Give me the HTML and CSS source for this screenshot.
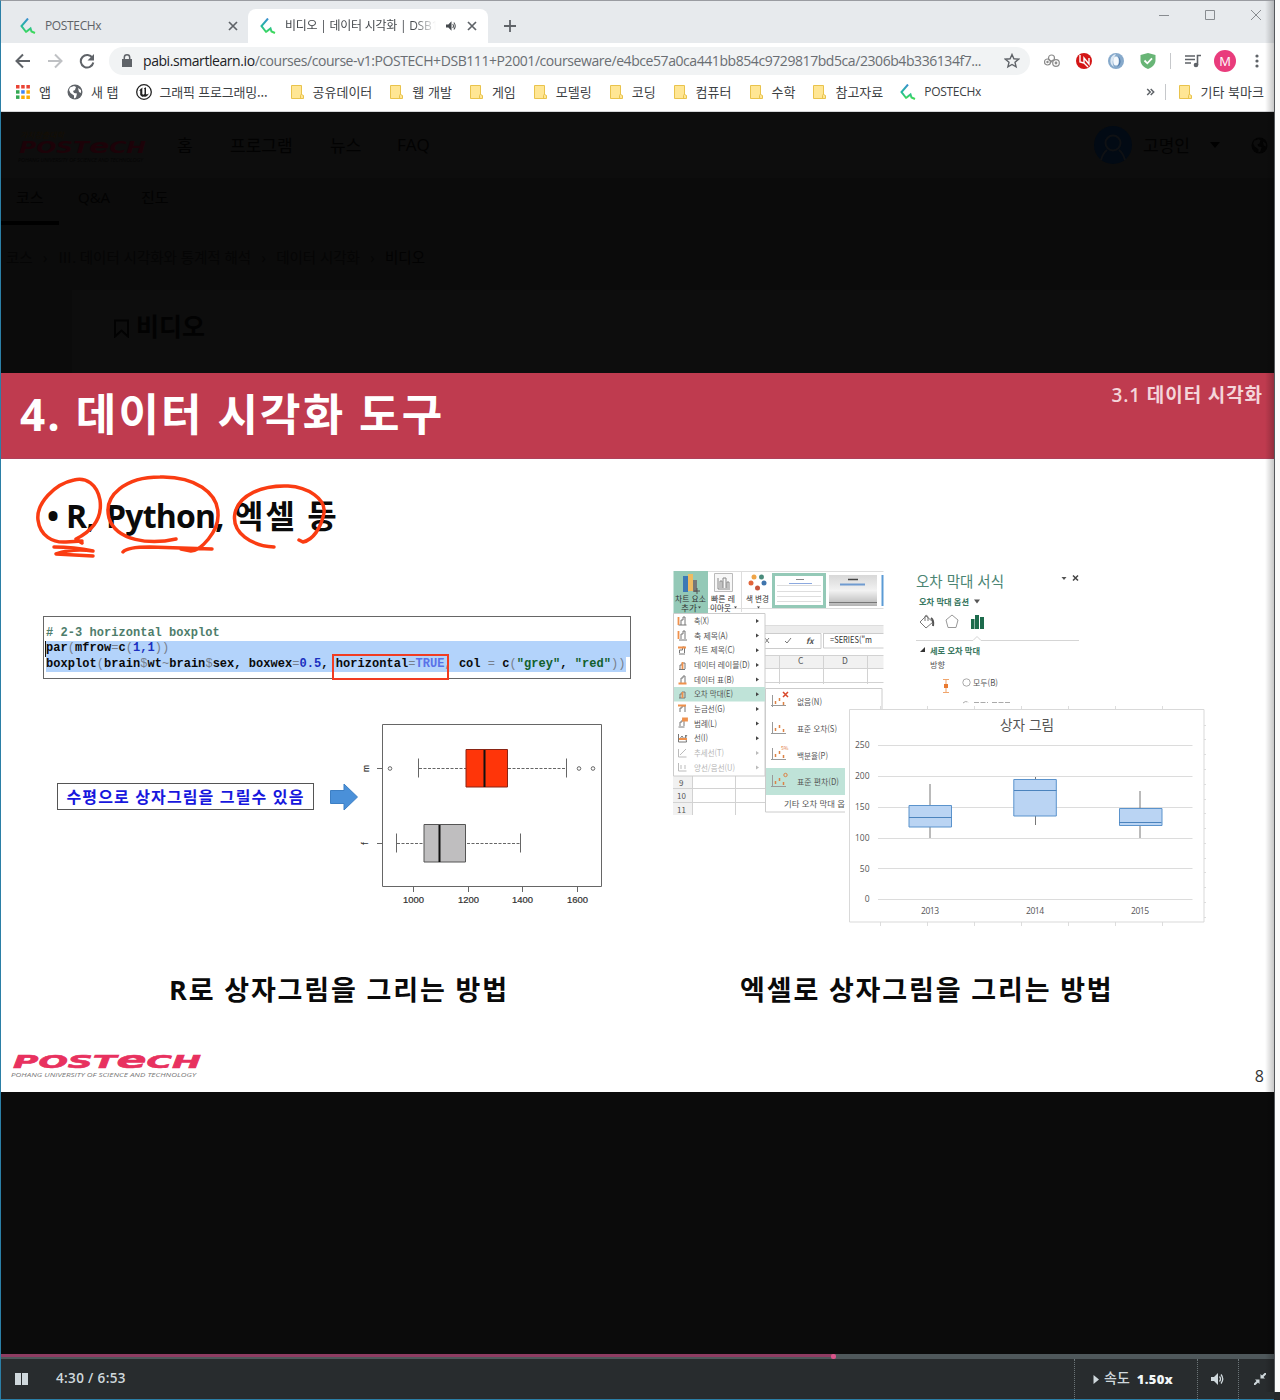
FILE: index.html
```html
<!DOCTYPE html>
<html lang="ko">
<head>
<meta charset="utf-8">
<title>비디오 | 데이터 시각화 | DSB111</title>
<link rel="stylesheet" href="styles.css">
</head>
<body>
<svg width="0" height="0" class="defs">
  <defs>
    <linearGradient id="mark" x1="0" y1="0" x2="0" y2="1"><stop offset="0" stop-color="#3b8fd0"/><stop offset=".5" stop-color="#25b8a0"/><stop offset="1" stop-color="#3fdc55"/></linearGradient>
    <linearGradient id="silver" x1="0" y1="0" x2="0" y2="1"><stop offset="0" stop-color="#d8d8d8"/><stop offset=".5" stop-color="#f2f2f2"/><stop offset="1" stop-color="#b4b4b4"/></linearGradient>
    <symbol id="px" viewBox="0 0 16 16"><path d="M8 .5 1.500 8 6.500 14.500M6 14 10.500 10.500 11.500 13.500 15 15" fill="none" stroke="url(#mark)" stroke-width="2"/></symbol>
    <symbol id="folder" viewBox="0 0 13 14"><path d="M.5.5h10v9l2 1v3H.5z" fill="#ffe694" stroke="#e9c34c"/><path d="M9.500 13.500v-3l1-1.500" fill="none" stroke="#e9c34c"/></symbol>
    <symbol id="x" viewBox="0 0 10 10"><path d="M1 1l8 8M9 1 1 9" stroke="#5f6368" stroke-width="1.700"/></symbol>
    <symbol id="spk" viewBox="0 0 14 12"><path d="M0 4h3l4-4v12L3 8H0z" fill="currentColor"/><path d="M8.500 3.500q2 2.500 0 5M10 1.500q3.500 4.500 0 9" fill="none" stroke="currentColor" stroke-width="1.300"/></symbol>
    <symbol id="globe" viewBox="0 0 16 16"><circle cx="8" cy="8" r="7.500" fill="currentColor"/><path d="M3 3.500 7 2l2 1-1 3-2 1 1 2 3 .5-1 4-2 1v-3L3.500 9 2 6z" fill="var(--land)"/><path d="M11 4l3 2v3l-2-1z" fill="var(--land)"/></symbol>
  </defs>
</svg>
<div class="screen">
<div class="window">
  <div class="tabs">
    <div class="tab"><svg class="i16"><use href="#px"/></svg><span class="tab-name">POSTECHx</span><svg class="i10"><use href="#x"/></svg></div>
    <div class="tab active"><svg class="i16"><use href="#px"/></svg><span class="tab-name faded">비디오 | 데이터 시각화 | DSB111</span><svg class="tab-audio"><use href="#spk"/></svg><svg class="i10"><use href="#x"/></svg></div>
    <svg class="plus" viewBox="0 0 12 12"><path d="M6 0v12M0 6h12" stroke="#5f6368" stroke-width="1.800"/></svg>
    <div class="winctl">
      <svg viewBox="0 0 12 12"><path d="M1 6.500h10" stroke="#888c90"/></svg>
      <svg viewBox="0 0 12 12"><path d="M1.500 1.500h9v9h-9z" fill="none" stroke="#888c90"/></svg>
      <svg viewBox="0 0 12 12"><path d="M1 1l10 10M11 1 1 11" stroke="#888c90"/></svg>
    </div>
  </div>
  <div class="toolbar">
    <svg class="nav-i" viewBox="0 0 16 16"><path d="M15 8H2M8 1.500 1.500 8 8 14.500" fill="none" stroke="#5f6368" stroke-width="2"/></svg>
    <svg class="nav-i" viewBox="0 0 16 16"><path d="M1 8h13M8 1.500 14.500 8 8 14.500" fill="none" stroke="#bfc1c4" stroke-width="2"/></svg>
    <svg class="nav-i" viewBox="0 0 16 16"><path d="M13.500 5A6.300 6.300 0 1 0 14.300 9.500" fill="none" stroke="#5f6368" stroke-width="2"/><path d="M15 1v6.500H8.500z" fill="#5f6368"/></svg>
    <div class="omnibox">
      <svg class="lock" viewBox="0 0 10 13"><path d="M0 5h10v8H0z" fill="#5f6368"/><path d="M2.300 5V3.500a2.700 2.700 0 0 1 5.400 0V5" fill="none" stroke="#5f6368" stroke-width="1.500"/></svg>
      <span class="url"><b>pabi.smartlearn.io</b>/courses/course-v1:POSTECH+DSB111+P2001/courseware/e4bce57a0ca441bb854c9729817bd5ca/2306b4b336134f7...</span>
      <svg class="star" viewBox="0 0 16 16"><path d="M8 1.500l1.900 4.300 4.700.4-3.600 3.100 1.100 4.600L8 11.500l-4.100 2.400L5 9.300 1.400 6.200l4.700-.4z" fill="none" stroke="#5f6368" stroke-width="1.400"/></svg>
    </div>
    <div class="ext">
      <svg class="i16" viewBox="0 0 16 16" fill="none" stroke="#8b8b8b" stroke-width="1.200"><circle cx="7.500" cy="5" r="3"/><circle cx="3.500" cy="9" r="3"/><circle cx="12" cy="10" r="3.300"/><circle cx="12" cy="10" r=".8"/><circle cx="3.500" cy="9" r=".6"/><path d="M6 10l3-3"/></svg>
      <svg class="i16" viewBox="0 0 16 16"><circle cx="8" cy="8" r="8" fill="#d31616"/><path d="M4 2v7l4 1V5l5 6V5M8 10l4 4" fill="none" stroke="#fff" stroke-width="1.400"/></svg>
      <svg class="i16" viewBox="0 0 16 16"><circle cx="8" cy="8" r="8" fill="#86a9cb"/><path d="M8 1a7 7 0 0 0-2 13c-3-6 0-9 2-13" fill="#dce8f4"/><ellipse cx="8" cy="8" rx="2.800" ry="4.500" fill="#f5f9fd"/><path d="M9 14c4-2 5-7 1-11 2 4 2 8-1 11" fill="#4c76a8"/></svg>
      <svg class="i16" viewBox="0 0 16 16"><path d="M8 0l7.500 2v5c0 4-3 7.500-7.500 9C3.500 14.500.5 11 .5 7V2z" fill="#68b576"/><path d="M4.500 7.500 7.300 10.300 12 5.300" fill="none" stroke="#fff" stroke-width="1.800"/></svg>
    </div>
    <i class="vline"></i>
    <svg class="i16 media" viewBox="0 0 16 16"><path d="M0 3h10M0 6.500h10M0 10h6M12.500 12V2.500H16" fill="none" stroke="#5f6368" stroke-width="1.600"/><circle cx="11" cy="12" r="2.300" fill="#5f6368"/></svg>
    <span class="me">M</span>
    <svg class="kebab" viewBox="0 0 4 14"><g fill="#5f6368"><circle cx="2" cy="2" r="1.600"/><circle cx="2" cy="7" r="1.600"/><circle cx="2" cy="12" r="1.600"/></g></svg>
  </div>
  <div class="bookmarks">
    <div class="bm apps"><svg width="14" height="14" viewBox="0 0 14 14"><path d="M0 0h3.500v3.500H0zM5.200 0h3.500v3.500H5.200zM10.400 0h3.500v3.500h-3.500z" fill="#ea4335"/><path d="M0 5.200h3.500v3.500H0z" fill="#34a853"/><path d="M5.200 5.200h3.500v3.500H5.200z" fill="#4285f4"/><path d="M10.400 5.200h3.500v3.500h-3.500zM5.200 10.400h3.500v3.500H5.200zM10.400 10.400h3.500v3.500h-3.500z" fill="#fbab05"/><path d="M0 10.400h3.500v3.500H0z" fill="#34a853"/></svg>앱</div>
    <div class="bm newtab"><svg class="i16 gl"><use href="#globe"/></svg>새 탭</div>
    <div class="bm ue"><svg class="i16" viewBox="0 0 16 16"><circle cx="8" cy="8" r="7.300" fill="#fff" stroke="#222" stroke-width="1.300"/><path d="M3 7Q4.500 4 7 3.500L6.300 4.500V10l.9.800 1.300-.8V5L7.800 4.300 10 3.200V10l.8.600L13 9.500Q11.500 12.500 8.800 13L8 12.300 7 13Q5.200 12.500 4.200 11V6.500z" fill="#222"/></svg>그래픽 프로그래밍...</div>
    <div class="bm"><svg class="fd"><use href="#folder"/></svg>공유데이터</div>
    <div class="bm"><svg class="fd"><use href="#folder"/></svg>웹 개발</div>
    <div class="bm"><svg class="fd"><use href="#folder"/></svg>게임</div>
    <div class="bm"><svg class="fd"><use href="#folder"/></svg>모델링</div>
    <div class="bm"><svg class="fd"><use href="#folder"/></svg>코딩</div>
    <div class="bm"><svg class="fd"><use href="#folder"/></svg>컴퓨터</div>
    <div class="bm"><svg class="fd"><use href="#folder"/></svg>수학</div>
    <div class="bm"><svg class="fd"><use href="#folder"/></svg>참고자료</div>
    <div class="bm site"><svg class="i16"><use href="#px"/></svg><span class="lat">POSTECHx</span></div>
    <svg class="more" viewBox="0 0 8 8"><path d="M.7 1l3 3-3 3M4.200 1l3 3-3 3" fill="none" stroke="#5f6368" stroke-width="1.500"/></svg>
    <i class="vline"></i>
    <div class="bm other"><svg class="fd"><use href="#folder"/></svg>기타 북마크</div>
  </div>
  <div class="page">
    <div class="site-head">
      <svg class="logo-dark" viewBox="0 0 130 32"><text x="2" y="7" font-size="8" textLength="44" fill="#150d04" class="kr it">가치창출대학</text><text x="1" y="22" font-size="15" textLength="127" lengthAdjust="spacingAndGlyphs" fill="#1c0208" class="brand">POST<tspan font-size="19">e</tspan>CH</text><text x="0" y="31" font-size="5.500" textLength="125" fill="#050505" class="it">POHANG UNIVERSITY OF SCIENCE AND TECHNOLOGY</text></svg>
      <span class="n1">홈</span><span class="n2">프로그램</span><span class="n3">뉴스</span><span>FAQ</span>
      <div class="user">
        <svg class="face" viewBox="0 0 38 38"><circle cx="19" cy="19" r="19" fill="#020a14"/><g fill="none" stroke="#0f1114" stroke-width="2"><circle cx="19" cy="17" r="7.500"/><path d="M7 34q2-7 6-10M31 34q-2-7-6-10"/></g></svg>
        <span>고명인</span>
        <svg class="caret" viewBox="0 0 10 6"><path d="M0 0h10L5 6z"/></svg>
        <svg class="gdark"><use href="#globe"/></svg>
      </div>
    </div>
    <div class="subnav"><span class="on">코스</span><span class="qa">Q&amp;A</span><span>진도</span></div>
    <div class="crumbs"><span>코스</span><i>›</i><span>Ⅲ. 데이터 시각화와 통계적 해석</span><i>›</i><span>데이터 시각화</span><i>›</i><span class="here">비디오</span></div>
    <div class="panel"><svg viewBox="0 0 16 19"><path d="M1.500 1.500h13v16L8 11.500l-6.500 6z" fill="none" stroke="#020202" stroke-width="2"/></svg>비디오</div>
  </div>
  <div class="slide">
    <div class="slide-head"><h1>4. 데이터 시각화 도구</h1><span>3.1 데이터 시각화</span></div>
    <div class="topic"><p><span class="tr">• R,</span><span class="tp">Python,</span><span class="te">엑셀 등</span></p>
      <svg class="ink" viewBox="1 459 400 110" fill="none" stroke="#fa3c12" stroke-width="3.500" stroke-linecap="round" stroke-linejoin="round">
        <path d="M82 543 76 539C88 533 103 522 100 500C97 484 86 477 74 480C54 484 36 504 38 520C40 536 53 543 66 542L82 541"/><path d="M54 547q20 0 39 4M93 551q-20-3-37 3l37 2"/>
        <path d="M176 539C150 545 116 541 109 518C103 495 126 477 160 477C195 476 218 493 218 514C219 532 200 551 191 551L181 549M123 552Q127 547 150 547L212 549"/>
        <path d="M274 547C252 546 231 533 235 513C239 495 262 485 288 486C308 487 326 499 324 513C321 528 313 540 303 542L299 540"/>
      </svg>
    </div>
    <div class="figures">
      <div class="left">
        <div class="code"><div class="cm"># 2-3 horizontal boxplot</div><div class="sel cursor">par<i>(</i>mfrow<i>=</i>c<i>(</i><b>1,1</b><i>))</i></div><div class="sel short">boxplot<i>(</i>brain<i>$</i>wt<i>~</i>brain<i>$</i>sex, boxwex<i>=</i><b>0.5</b>, horizontal<i>=</i><em>TRUE</em><i>,</i> col <i>=</i> c<i>(</i><q>"grey"</q>, <q>"red"</q><i>))</i></div><div class="redbox"></div></div>
        <div class="plotrow">
          <div class="callout">수평으로 상자그림을 그릴수 있음</div>
          <svg class="arrow" viewBox="0 0 28 28"><path d="M.5 7.500H14V1L27.500 14 14 27V20.500H.5z" fill="#4a90d9" stroke="#3d7fc4"/></svg>
          <svg class="boxplot" viewBox="359 720 250 190">
            <g fill="none" stroke="#666"><path d="M382.500 724.500h219v162h-219zM377 768.500h5M377 843.500h5M413.500 887v5M468.500 887v5M522.500 887v5M577.500 887v5"/><path d="M419 768.500h47M508 768.500h58M397 843.500h27M467 843.500h54" stroke-dasharray="3 1.500"/><path d="M418.500 758.500v19M566.500 758.500v19M396.500 833.500v19M520.500 833.500v19"/><circle cx="390" cy="768.500" r="1.800"/><circle cx="579" cy="768.500" r="1.800"/><circle cx="593" cy="768.500" r="1.800"/></g>
            <path d="M466 749.500h41.500v37.500H466z" fill="#ff3509" stroke="#8a2414"/><path d="M424 824.500h41.500V862H424z" fill="#bfbebf" stroke="#555"/><path d="M484.500 750v37M439.500 825v37" stroke="#111" stroke-width="2"/>
            <g class="ar" font-size="8.500" fill="#333" stroke="#333" stroke-width=".2" text-anchor="middle"><text x="413.500" y="903" textLength="21" lengthAdjust="spacingAndGlyphs">1000</text><text x="468.500" y="903" textLength="21" lengthAdjust="spacingAndGlyphs">1200</text><text x="522.500" y="903" textLength="21" lengthAdjust="spacingAndGlyphs">1400</text><text x="577.500" y="903" textLength="21" lengthAdjust="spacingAndGlyphs">1600</text><text transform="translate(369 768.500) rotate(-90)">m</text><text transform="translate(368 843.500) rotate(-90)">f</text></g>
          </svg>
        </div>
        <p class="caption">R로 상자그림을 그리는 방법</p>
      </div>
      <div class="right">
        <svg class="excel" viewBox="660 559 560 381">
          <g class="kr" font-size="8.500" fill="#555">
          <path d="M708 571.500h175.500M708 608.500h175.500M765 625.500h118.500" stroke="#ddd"/><path d="M765 626h118.500v7H765z" fill="#ececec"/>
          <path d="M673.500 571h34.500v43h-34.500z" fill="#94c9b7"/><path d="M683 576h5v16h-5z" fill="#3d79b5"/><path d="M688 574h5v17h-5z" fill="#efbb62"/><path d="M693 580h4v12h-4z" fill="#777"/><path d="M694 591h6M697 588v6" stroke="#555"/>
          <g fill="#333" font-size="8"><text x="675" y="601.500" textLength="31" lengthAdjust="spacingAndGlyphs">차트 요소</text><text x="681" y="611" textLength="16" lengthAdjust="spacingAndGlyphs">추가</text><text x="711" y="601.500" textLength="24" lengthAdjust="spacingAndGlyphs">빠른 레</text><text x="710" y="611" textLength="21" lengthAdjust="spacingAndGlyphs">이아웃</text><text x="746" y="601.500" textLength="23" lengthAdjust="spacingAndGlyphs">색 변경</text></g>
          <path d="M698 606.500h3l-1.500 2zM734 606.500h3l-1.500 2zM757 606.500h3l-1.500 2z" fill="#444"/>
          <path d="M714.500 573.500h18v18h-18z" fill="#f7f7f7" stroke="#bbb"/><path d="M718 578v11h12M720 588v-7h2v7M723 588v-10h3v10M727 588v-6h2v6" fill="none" stroke="#888"/>
          <path d="M741.500 572v40" stroke="#ddd"/><circle cx="754" cy="577" r="2.500" fill="#efa548"/><circle cx="761.500" cy="577" r="2.500" fill="#4b8c7c"/><circle cx="751" cy="583" r="2.500" fill="#e2653a"/><circle cx="764" cy="583" r="2.500" fill="#3f75ad"/><circle cx="757.500" cy="588" r="2.500" fill="#c8553c"/>
          <path d="M773.500 574.500h51v32h-51z" fill="#fff" stroke="#94c9b7" stroke-width="3"/><path d="M777 585.500h44M777 591.500h44M777 596.500h44M777 601.500h44" stroke="#ddd"/><path d="M789 583.500h23" stroke="#8ca9e0"/><path d="M796 579.500h8" stroke="#888"/>
          <path d="M829 575h48v31h-48z" fill="url(#silver)"/><path d="M829 602.500h48" stroke="#777"/><path d="M840 584.500h25" stroke="#6f9bd0" stroke-width="2"/><path d="M848 579.500h10" stroke="#444" stroke-width="1.500"/><path d="M882.500 575v31" stroke="#5b9bd5" stroke-width="2"/>
          <path d="M760 633.500h61v15h-61zM823.500 633.500h60M823.500 633v15h60" fill="none" stroke="#ccc"/><path d="M765 638l4 5M769 638l-4 5M785 641l2 2 4-5" fill="none" stroke="#777"/><text x="806" y="643.500" font-style="italic" font-weight="700" font-size="8">fx</text><text x="830" y="643" font-size="8.500" textLength="42" lengthAdjust="spacingAndGlyphs" fill="#333">=SERIES("m</text>
          <path d="M765 656h118.500v12H765z" fill="#f1f1f1"/><path d="M765 655.500h118.500M765 668.500h118.500M765 682.500h118.500M779.500 656v28M823.500 656v28M867.500 656v28" stroke="#d2d2d2"/><text x="798" y="664" font-size="8.500">C</text><text x="842" y="664" font-size="8.500">D</text>
          <path d="M673 776h19v39h-19z" fill="#f1f1f1"/><path d="M673 788.500h92M673 802.500h92M692.500 776v39M735.500 776v39" stroke="#d2d2d2"/><text x="679" y="785.500" font-size="8">9</text><text x="677" y="799" font-size="8">10</text><text x="677" y="812.500" font-size="8">11</text>
          <path d="M673.500 613.500h91.500v162.500h-91.500z" fill="#fff" stroke="#ccc"/><path d="M674 687h91v14.500h-91z" fill="#bfe3d8"/>
          <g><text x="694" y="624" textLength="15" lengthAdjust="spacingAndGlyphs">축(X)</text><text x="694" y="638.700" textLength="34" lengthAdjust="spacingAndGlyphs">축 제목(A)</text><text x="694" y="653.300" textLength="41" lengthAdjust="spacingAndGlyphs">차트 제목(C)</text><text x="694" y="668" textLength="56" lengthAdjust="spacingAndGlyphs">데이터 레이블(D)</text><text x="694" y="682.600" textLength="40" lengthAdjust="spacingAndGlyphs">데이터 표(B)</text><text x="694" y="697.300" textLength="39" lengthAdjust="spacingAndGlyphs">오차 막대(E)</text><text x="694" y="712" textLength="31" lengthAdjust="spacingAndGlyphs">눈금선(G)</text><text x="694" y="726.600" textLength="23" lengthAdjust="spacingAndGlyphs">범례(L)</text><text x="694" y="741.200" textLength="14" lengthAdjust="spacingAndGlyphs">선(I)</text><g fill="#b5b5b5"><text x="694" y="756" textLength="30" lengthAdjust="spacingAndGlyphs">추세선(T)</text><text x="694" y="770.500" textLength="41" lengthAdjust="spacingAndGlyphs">양선/음선(U)</text></g></g>
          <path d="M756 619l3 2-3 2zM756 633.600l3 2-3 2zM756 648.300l3 2-3 2zM756 663l3 2-3 2zM756 677.600l3 2-3 2zM756 692.300l3 2-3 2zM756 707l3 2-3 2zM756 721.600l3 2-3 2zM756 736.200l3 2-3 2z" fill="#444"/><path d="M756 751l3 2-3 2zM756 765.500l3 2-3 2z" fill="#bbb"/>
          <g fill="none" stroke="#777"><path d="M678.500 617v8h8M681 625v-5h2v-3h2v8M679 640h8M681 639v-5h2v-3h2v8M679 654h6M679.500 653v-3h3v-3h2v6M679 669.500h6M680 669v-4h2v-2h3v6M681 683v-5h2v-2h2v7M679 698h6M680 698v-4h2v-2h3v6M680 712v-4h2v-2h3v6M678.500 727h6M680 726v-4h2v-2h2v6M678.500 734v8h8l-1-7M679 740l3-4 2 3 3-4"/><path d="M678.500 749v8h8M680 755l6-6M678.500 763v8h8M681 765v4M685 765v4" stroke="#bbb"/></g>
          <path d="M678.500 617v8M678.500 631v8M678 647.500h8M682.500 662v7M678.500 683.500h8M682.500 692v6M678 705.500h8M683 720.500h4v-2h-4zM679 739h8" fill="none" stroke="#ef914c" stroke-width="1.800"/>
          <path d="M845 812H765.500V688.500H882V709" fill="#fff" stroke="#ccc"/><path d="M766 768h79v27h-79z" fill="#bfe3d8"/>
          <text x="797" y="705" textLength="25" lengthAdjust="spacingAndGlyphs">없음(N)</text><text x="797" y="731.500" textLength="40" lengthAdjust="spacingAndGlyphs">표준 오차(S)</text><text x="797" y="758.500" textLength="31" lengthAdjust="spacingAndGlyphs">백분율(P)</text><text x="797" y="785" textLength="42" lengthAdjust="spacingAndGlyphs">표준 편차(D)</text><text x="784" y="807" textLength="61" lengthAdjust="spacingAndGlyphs">기타 오차 막대 옵</text>
          <path d="M772.500 695v12M771 705.500h15M772.500 722v12M771 733.500h15M772.500 748v12M771 759.500h15M772.500 775v12M771 786.500h15" stroke="#999"/><path d="M775.500 701v3M779.500 698v3M783.500 702v3M775.500 728v3M779.500 725v3M783.500 729v3M775.500 754v3M779.500 751v3M783.500 755v3M775.500 781v3M779.500 778v3M783.500 782v3" stroke="#dd8245" stroke-width="1.500"/><path d="M783 692l5 5M788 692l-5 5" stroke="#d9482b" stroke-width="1.500"/><text x="781" y="750" font-size="5" fill="#dd7435">5%</text><circle cx="785.500" cy="775" r="1.700" fill="none" stroke="#dd8245"/>
          <text x="916" y="587" font-size="15" fill="#4b8573" textLength="88" lengthAdjust="spacingAndGlyphs">오차 막대 서식</text><path d="M1061.500 577h5l-2.500 3zM974 599.500h6l-3 4z" fill="#555"/><path d="M1073 575.500l5 5M1078 575.500l-5 5" stroke="#444" stroke-width="1.500"/>
          <g font-weight="700" fill="#38775f"><text x="919" y="604.500" textLength="50" lengthAdjust="spacingAndGlyphs">오차 막대 옵션</text><text x="930" y="653.500" textLength="50" lengthAdjust="spacingAndGlyphs">세로 오차 막대</text></g><path d="M925 647v5h-5z" fill="#333"/><text x="930" y="667.500" textLength="15" lengthAdjust="spacingAndGlyphs">방향</text>
          <path d="M920 622l6-6 7 6-7 6zM925 621v-5q2-2 3 1v4" fill="#fff" stroke="#777"/><path d="M931 618q3 2 2 8" fill="none" stroke="#555" stroke-width="2"/><path d="M952 615l6 5-2 7.500h-8l-2-7.500z" fill="none" stroke="#999"/><path d="M971 619h3.500v10H971zM975 615h4v14h-4zM980 617h4v12h-4z" fill="#1d6b4c"/>
          <path d="M916 640.500h57l4-4 4 4h98" fill="none" stroke="#d5d5d5"/><path d="M943 679.500h6M946 680v12M943 692.500h6" stroke="#f0a56c"/><path d="M944 684h4v4h-4z" fill="#e9792f"/><circle cx="966.500" cy="682.500" r="3.700" fill="none" stroke="#aaa"/><text x="973" y="686" textLength="25" lengthAdjust="spacingAndGlyphs">모두(B)</text><path d="M963 703q3-3 6 0M974 702.500h14M992 702.500h18" fill="none" stroke="#aaa" stroke-dasharray="5 1.500"/>
          <path d="M880.500 706v3M927.500 706v3M974.500 706v3M1021.500 706v3M1068.500 706v3M1115.500 706v3M1162.500 706v3M880.500 922v4M927.500 922v4M974.500 922v4M1021.500 922v4M1068.500 922v4M1115.500 922v4M1162.500 922v4M1204 725.500h2M1204 739.500h2M1204 754.500h2M1204 769.500h2M1204 784.500h2M1204 799.500h2M1204 813.500h2M1204 828.500h2M1204 843.500h2M1204 858.500h2M1204 872.500h2M1204 887.500h2M1204 902.500h2M1204 917.500h2" stroke="#ddd"/>
          <path d="M849.500 709.500h354.500v212.500h-354.500z" fill="#fff" stroke="#d9d9d9"/><text x="1000" y="730" font-size="14" textLength="54" lengthAdjust="spacingAndGlyphs">상자 그림</text>
          <path d="M878 745.500h314.500M878 776.500h314.500M878 807.500h314.500M878 838.500h314.500M878 868.500h314.500M878 899.500h314.500" stroke="#dcdcdc"/>
          <g class="sg" font-size="8.500" text-anchor="end"><text x="869.500" y="748">250</text><text x="869.500" y="779">200</text><text x="869.500" y="810">150</text><text x="869.500" y="841">100</text><text x="869.500" y="871.500">50</text><text x="869.500" y="902">0</text></g>
          <g class="sg" font-size="8.500" text-anchor="middle"><text x="930" y="913.500" textLength="18">2013</text><text x="1035" y="913.500" textLength="18">2014</text><text x="1140" y="913.500" textLength="18">2015</text></g>
          <path d="M930 784v54M1035.500 777v48M1140 791v47" stroke="#777"/><path d="M909 805.500h42.500V827H909zM1013.800 779.500h42.500V816h-42.500zM1119.500 808.500h42.500v17h-42.500z" fill="#bad4f3" stroke="#5b93cc"/><path d="M909 817.500h42.500M1014 790.500h42.500M1119 822.500h42.500" stroke="#4b83bd"/>
          </g>
        </svg>
        <p class="caption">엑셀로 상자그림을 그리는 방법</p>
      </div>
    </div>
    <div class="slide-foot"><svg viewBox="0 0 192 28"><text x="2" y="17" font-size="18" textLength="188" lengthAdjust="spacingAndGlyphs" fill="#e8315f" stroke="#e8315f" stroke-width=".6" class="brand">POST<tspan font-size="23">e</tspan>CH</text><text x="0" y="26" font-size="6" textLength="185" lengthAdjust="spacingAndGlyphs" fill="#777" class="it">POHANG UNIVERSITY OF SCIENCE AND TECHNOLOGY</text></svg><span>8</span></div>
  </div>
  <div class="void"></div>
  <div class="progress"><div class="played"></div><i></i></div>
  <div class="controls">
    <svg class="pause" viewBox="0 0 13 12"><path d="M0 0h6v12H0zM7 0h6v12H7z" fill="#cfd8dc"/></svg>
    <span class="time">4:30 / 6:53</span>
    <div class="ctl speed"><svg viewBox="0 0 6 9"><path d="M.5 0 6 4.500.5 9z" fill="#cfd8dc"/></svg><span>속도</span><b>1.50x</b></div>
    <div class="ctl vol"><svg><use href="#spk"/></svg></div>
    <div class="ctl full"><svg viewBox="0 0 12 12"><path d="M12 0 8 4M0 12l4-4" stroke="#cfd8dc" stroke-width="2"/><path d="M6.500 1v4.500H11zM1 6.500h4.500V11z" fill="#cfd8dc"/></svg></div>
  </div>
</div>
<div class="beyond"></div>
</div>
</body>
</html>
```
FILE: styles.css
```css
* { box-sizing: border-box; }
body { margin: 0; font-family: "Open Sans", "Noto Sans CJK KR", sans-serif; background: #25292b; }
svg { display: block; flex: none; }
i { font-style: normal; }
.defs { position: absolute; }
.screen { display: flex; width: 1280px; height: 1400px; overflow: hidden; }
.window { position: relative; width: 1274px; height: 1400px; border-left: 1px solid #2b7fa6; border-top: 1px solid #9a9ca1; border-bottom: 1px solid #2b7fa6; flex: none; display: flex; flex-direction: column; }
.window::after { content: ""; position: absolute; right: 0; top: 0; width: 9px; height: 1391px; background: linear-gradient(90deg, rgba(0,0,0,0), rgba(0,0,0,.22)); }
.beyond { width: 6px; height: 1392px; background: #fbfbfb; border-left: 1px solid #55585c; }
.i16 { width: 16px; height: 16px; }
.i10 { width: 10px; height: 10px; }
.kr { font-family: "Noto Sans CJK KR", sans-serif; }
.it { font-style: italic; font-family: "Open Sans", "Noto Sans CJK KR", sans-serif; }
.ar { font-family: "Liberation Sans", sans-serif; }
.sg { font-family: "Open Sans", sans-serif; }
.brand { font-family: "DejaVu Sans", sans-serif; font-weight: 700; font-style: italic; }

.tabs { display: flex; height: 42px; background: #e7eaed; padding-top: 8px; flex: none; }
.tab { display: flex; align-items: center; width: 247px; height: 34px; padding: 0 10px 0 19px; font-size: 12px; color: #5f6368; }
.tab.active { width: 240px; background: #fff; border-radius: 8px 8px 0 0; padding-left: 12px; padding-right: 11px; }
.tab-name { margin: -2px 0 0 9px; flex: 1; white-space: nowrap; letter-spacing: -.35px; overflow: hidden; }
.tab-name.faded { flex: none; width: 151px; margin: -2px 10px 0 9px; letter-spacing: -.25px; color: #45494d; -webkit-mask-image: linear-gradient(90deg, #000 85%, transparent); mask-image: linear-gradient(90deg, #000 85%, transparent); }
.tab-audio { width: 11px; height: 10px; color: #45494d; margin-right: 10px; }
.plus { width: 12px; height: 12px; margin: 11px 0 0 16px; }
.winctl { display: flex; gap: 34px; margin-left: auto; padding-right: 12px; }
.winctl svg { width: 12px; height: 12px; }

.toolbar { display: flex; align-items: center; height: 35px; padding-left: 14px; background: #fff; flex: none; }
.nav-i { width: 16px; height: 16px; margin-right: 16px; }
.omnibox { display: flex; align-items: center; width: 921px; height: 28px; margin-left: -2px; border-radius: 14px; background: #f1f3f4; padding: 0 10px 0 13px; }
.lock { width: 10px; height: 13px; }
.url { margin-left: 11px; flex: 1; font-size: 14px; color: #6a6e73; white-space: nowrap; letter-spacing: -.43px; }
.url b { font-weight: 400; color: #202124; }
.star { width: 16px; height: 16px; }
.ext { display: flex; gap: 16px; margin-left: 14px; }
.vline { width: 1px; height: 16px; background: #c6c8cb; }
.toolbar .vline { margin: 0 14px; }
.me { width: 22px; height: 22px; margin: 0 19px 0 13px; border-radius: 50%; background: #e93c7c; color: #fff; font-size: 13px; line-height: 22px; text-align: center; }
.kebab { width: 4px; height: 14px; }

.bookmarks { display: flex; align-items: center; height: 34px; padding: 0 10px 5px 15px; background: #fff; border-bottom: 1px solid #d5d6d8; font: 13px/18px "Noto Sans CJK KR", sans-serif; color: #3c4043; flex: none; }
.bm { display: flex; align-items: center; white-space: nowrap; margin-right: 18px; gap: 10px; }
.bm .fd { width: 13px; height: 14px; margin-right: -1px; }
.apps { margin-right: 16px; gap: 9px; }
.newtab, .ue { gap: 8px; margin-right: 17px; }
.ue { width: 138px; letter-spacing: -.2px; }
.site { gap: 8px; margin: 0 auto 0 -1px; }
.lat { font-size: 12px; letter-spacing: -.3px; font-family: "Open Sans", sans-serif; }
.gl { color: #5f6368; --land: #fff; }
.more { width: 9px; height: 8px; margin-right: 10px; }
.other { margin: 0 0 0 13px; }

.page { height: 261px; background: #0b0b0b; color: #020202; overflow: hidden; flex: none; }
.site-head { display: flex; align-items: center; height: 66px; background: #0d0d0d; padding-left: 17px; font-size: 17px; }
.logo-dark { width: 130px; height: 32px; margin-right: 29px; margin-top: 4px; overflow: visible; }
.site-head > span { margin-top: -2px; }
.n1 { width: 53px; } .n2 { width: 100px; } .n3 { width: 67px; }
.user { display: flex; align-items: center; margin-left: auto; padding-right: 6px; }
.user span { margin: -2px 20px 0 11px; width: 47px; white-space: nowrap; }
.face { width: 38px; height: 38px; }
.caret { width: 10px; height: 6px; margin-right: 31px; }
.gdark { width: 17px; height: 17px; color: #030303; --land: #0d0d0d; }
.subnav { display: flex; height: 47px; font-size: 15px; line-height: 39px; }
.on { width: 58px; padding-left: 15px; border-bottom: 4px solid #000; }
.qa { width: 63px; margin-left: 19px; }
.crumbs { display: flex; height: 65px; padding: 20px 0 0 5px; font-size: 14.5px; line-height: 25px; color: #050505; white-space: nowrap; }
.crumbs i { width: 25px; text-align: center; }
.here { color: #020202; }
.panel { display: flex; gap: 6px; align-items: center; height: 83px; margin-left: 71px; padding: 0 0 13px 41px; background: #0d0d0d; font-size: 25px; font-weight: 600; }
.panel svg { width: 17px; height: 19px; margin-top: 7px; }

.slide { height: 719px; background: #fff; flex: none; display: flex; flex-direction: column; color: #0a0a0a; font-family: "Noto Sans CJK KR", sans-serif; }
.slide-head { display: flex; justify-content: space-between; height: 86px; background: #bf3b4f; color: #fff; padding: 0 12px 0 19px; border-bottom: 1px solid #b0405a; }
.slide-head h1 { margin: 0; font: 700 44px/82px "Open Sans", "Noto Sans CJK KR", sans-serif; letter-spacing: 2.2px; white-space: nowrap; }
.slide-head span { font: 600 19px/45px "Open Sans", "Noto Sans CJK KR", sans-serif; letter-spacing: .9px; margin-right: -1px; color: #f4d5da; }
.topic { position: relative; height: 100px; padding-left: 46px; flex: none; }
.topic p { display: flex; margin: 0; font: 700 32px/113px "Open Sans", "Noto Sans CJK KR", sans-serif; white-space: nowrap; }
.tr { width: 59px; letter-spacing: -.7px; }
.tp { width: 128px; letter-spacing: -.8px; }
.te { letter-spacing: 2px; }
.ink { position: absolute; left: 0; top: 0; width: 400px; height: 110px; }
.figures { display: flex; height: 470px; flex: none; }
.left { width: 659px; }
.code { position: relative; margin: 57px 0 0 42px; width: 588px; height: 63px; border: 1px solid #666; padding: 9px 0 0 2px; font: 700 12px/15.4px "Liberation Mono", monospace; letter-spacing: .04px; white-space: pre; }
.cm { color: #4e7d6b; }
.sel { background: #b3d3fb; }
.cursor { box-shadow: -1px 0 #111; }
.short { width: 580px; }
.code i { color: #777f8c; font-weight: 400; }
.code b { color: #1a2fc0; }
.code em { color: #5a72e8; font-style: normal; }
.code q { quotes: none; color: #11602c; }
.redbox { position: absolute; left: 288px; top: 37px; width: 117px; height: 26px; border: 2px solid #f13c22; }
.plotrow { display: flex; margin-top: 41px; padding-left: 56px; height: 190px; }
.callout { width: 257px; height: 27px; margin-top: 63px; border: 1px solid #555; font-weight: 700; font-size: 16px; line-height: 24px; letter-spacing: 1.08px; color: #1717dd; text-align: center; white-space: nowrap; }
.arrow { width: 28px; height: 28px; margin: 63px 1px 0 16px; }
.boxplot { width: 250px; height: 190px; }
.caption { margin: 0; font: 700 27px/40px "Open Sans", "Noto Sans CJK KR", sans-serif; letter-spacing: 1.85px; white-space: nowrap; }
.left .caption { padding: 60px 0 0 168px; }
.excel { width: 560px; height: 381px; }
.right .caption { padding: 30px 0 0 80px; }
.slide-foot { display: flex; justify-content: space-between; padding: 22px 10px 0 10px; font: 16px/20px "Open Sans", sans-serif; color: #333; }
.slide-foot svg { width: 192px; height: 28px; }
.slide-foot span { margin-top: 15px; }

.void { height: 262px; background: #0b0b0b; flex: none; }
.progress { position: relative; height: 5px; background: #4f585b; flex: none; }
.played { width: 832px; height: 3px; background: #8e3c62; }
.progress i { position: absolute; left: 830px; top: 0; width: 5px; height: 5px; border-radius: 2px; background: #d9548a; }
.controls { display: flex; align-items: center; height: 40px; background: #282c2e; color: #cfd8dc; font: 700 13px/38px "Open Sans", "Noto Sans CJK KR", sans-serif; flex: none; }
.pause { width: 13px; height: 12px; margin-left: 14px; }
.time { margin: -2px auto 0 28px; font-weight: 600; font-size: 13.5px; letter-spacing: .35px; }
.ctl { display: flex; align-items: center; height: 40px; border-left: 1px dotted #6b7477; color: #cfd8dc; }
.speed { width: 123px; padding-left: 18px; }
.speed svg { width: 6px; height: 9px; margin-right: 5px; }
.speed span { font-weight: 500; font-size: 14px; margin: -2px 7px 0 0; }
.speed b { color: #f2f6f7; letter-spacing: .3px; }
.vol { width: 41px; padding-left: 13px; }
.vol svg { width: 14px; height: 12px; }
.full { width: 36px; padding-left: 15px; }
.full svg { width: 12px; height: 12px; }
```
